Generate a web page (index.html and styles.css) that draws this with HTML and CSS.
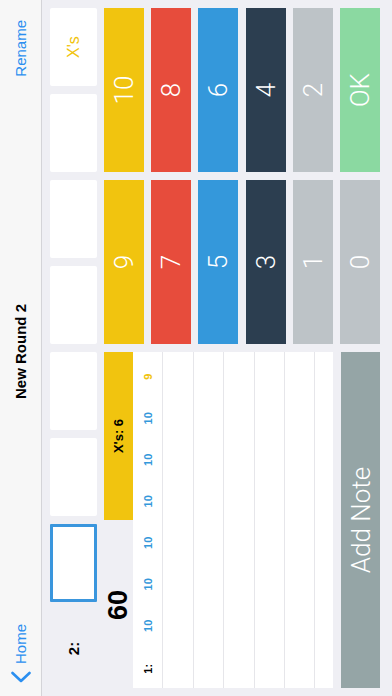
FILE: index.html
```html
<!DOCTYPE html>
<html lang="en">
<head>
    <meta charset="UTF-8">
    <meta name="viewport" content="width=device-width, initial-scale=1.0">
    <title>New Round 2</title>
    <link rel="stylesheet" href="styles.css">
</head>
<body>
    <!-- l'app est en paysage, on la tourne pour l'ecran portrait -->
    <div class="frame">
        <div class="screen">
            <div class="navbar">
                <a class="nav-back" href="#">
                    <svg width="12" height="20" viewBox="0 0 12 20"><path d="M10 1.5 L2 10 L10 18.5" fill="none" stroke="#2b8ff0" stroke-width="2.6" stroke-linecap="round" stroke-linejoin="round"/></svg>
                    Home
                </a>
                <div class="nav-title">New Round 2</div>
                <a class="nav-action" href="#">Rename</a>
            </div>

            <div class="content">
                <!-- volee en cours -->
                <div class="ends">
                    <div class="end-label">2:</div>
                    <div class="box selected"></div>
                    <div class="box"></div>
                    <div class="box"></div>
                    <div class="box"></div>
                    <div class="box"></div>
                    <div class="box"></div>
                    <div class="box xs">X's</div>
                </div>

                <div class="main">
                    <div class="left">
                        <div class="summary">
                            <div class="total">60</div>
                            <div class="xbar">X's: 6</div>
                        </div>
                        <div class="table">
                            <div class="row">
                                <span class="num">1:</span>
                                <span class="score">10</span>
                                <span class="score">10</span>
                                <span class="score">10</span>
                                <span class="score">10</span>
                                <span class="score">10</span>
                                <span class="score">10</span>
                                <span class="score gold">9</span>
                            </div>
                            <div class="row"></div>
                            <div class="row"></div>
                            <div class="row"></div>
                            <div class="row"></div>
                            <div class="row"></div>
                            <div class="row"></div>
                        </div>
                        <button class="add-note">Add Note</button>
                    </div>

                    <!-- clavier des points -->
                    <div class="keypad">
                        <button class="key yellow">9</button>
                        <button class="key yellow">10</button>
                        <button class="key red">7</button>
                        <button class="key red">8</button>
                        <button class="key blue">5</button>
                        <button class="key blue">6</button>
                        <button class="key dark">3</button>
                        <button class="key dark">4</button>
                        <button class="key grey">1</button>
                        <button class="key grey">2</button>
                        <button class="key grey">0</button>
                        <button class="key green">OK</button>
                    </div>
                </div>
            </div>
        </div>
    </div>
</body>
</html>
```

FILE: styles.css
```css
/* Styles globaux */
html, body {
    margin: 0;
    padding: 0;
    width: 392px;
    height: 696px;
    overflow: hidden;
    background: #efeff4;
    font-family: 'Liberation Sans', Arial, sans-serif;
    color: #000;
}

.frame {
    width: 392px;
    height: 696px;
    overflow: hidden;
}

/* Ecran paysage tourne de -90deg */
.screen {
    width: 696px;
    height: 392px;
    background: #efeff4;
    transform-origin: 0 0;
    transform: translateY(696px) rotate(-90deg);
}

/* Barre de navigation */
.navbar {
    height: 42px;
    box-sizing: border-box;
    background: #f7f7f7;
    border-bottom: 1px solid #d4d4d8;
    display: grid;
    grid-template-columns: 1fr auto 1fr;
    align-items: center;
    padding: 0 20px 0 13px;
    font-size: 15px;
}

.navbar a {
    color: #2b8ff0;
    text-decoration: none;
}

.nav-back {
    display: flex;
    align-items: center;
    gap: 7px;
    justify-self: start;
}

.nav-title {
    font-weight: bold;
}

.nav-action {
    justify-self: end;
}

.content {
    padding: 8px 8px 12px;
}

/* Rangee de la volee */
.ends {
    display: grid;
    grid-template-columns: repeat(8, 78px);
    gap: 8px;
    height: 47px;
}

.end-label {
    display: flex;
    align-items: center;
    justify-content: center;
    font-size: 15px;
    font-weight: bold;
    padding-left: 1px;
}

.box {
    background: #fff;
    border-radius: 2px;
}

.box.selected {
    border: 3px solid #3a96dd;
    border-radius: 1px;
}

.box.xs {
    display: flex;
    align-items: center;
    justify-content: center;
    color: #f1c40f;
    font-size: 16px;
}

.main {
    display: grid;
    grid-template-columns: 336px 336px;
    gap: 8px;
    margin-top: 7px;
    height: 276px;
}

.left {
    display: flex;
    flex-direction: column;
}

.summary {
    display: grid;
    grid-template-columns: 164px 1fr;
    gap: 4px;
    height: 29px;
}

.total {
    font-size: 27px;
    font-weight: bold;
    text-align: center;
    line-height: 29px;
    padding-left: 2px;
}

.xbar {
    background: #f1c40f;
    font-size: 13px;
    font-weight: bold;
    display: flex;
    align-items: center;
    justify-content: center;
}

/* Tableau des scores */
.table {
    background: #fff;
    height: 200px;
    overflow: hidden;
}

.row {
    height: 30.4px;
    box-sizing: border-box;
    border-bottom: 1px solid #e6e6ea;
    display: grid;
    grid-template-columns: repeat(8, 41.5px);
    align-items: center;
}

.row span {
    text-align: center;
    font-size: 11px;
    font-weight: bold;
}

.row .num {
    margin-left: -3px;
}

.score {
    color: #3498db;
}

.score.gold {
    color: #f1c40f;
}

button {
    border: none;
    margin: 0;
    padding: 0;
    color: #fff;
    font-family: 'Roboto', 'Liberation Sans', sans-serif;
    font-weight: 300;
    font-size: 26px;
    cursor: pointer;
}

.add-note {
    margin-top: 8px;
    height: 39px;
    background: #95a5a6;
}

/* Clavier */
.keypad {
    display: grid;
    grid-template-columns: 1fr 1fr;
    grid-template-rows: repeat(6, 1fr);
    column-gap: 8px;
    row-gap: 7.2px;
}

.key.yellow { background: #f1c40f; }
.key.red { background: #e74c3c; }
.key.blue { background: #3498db; }
.key.dark { background: #2c3e50; }
.key.grey { background: #bdc3c7; }
.key.green { background: #8bd9a1; }
```
